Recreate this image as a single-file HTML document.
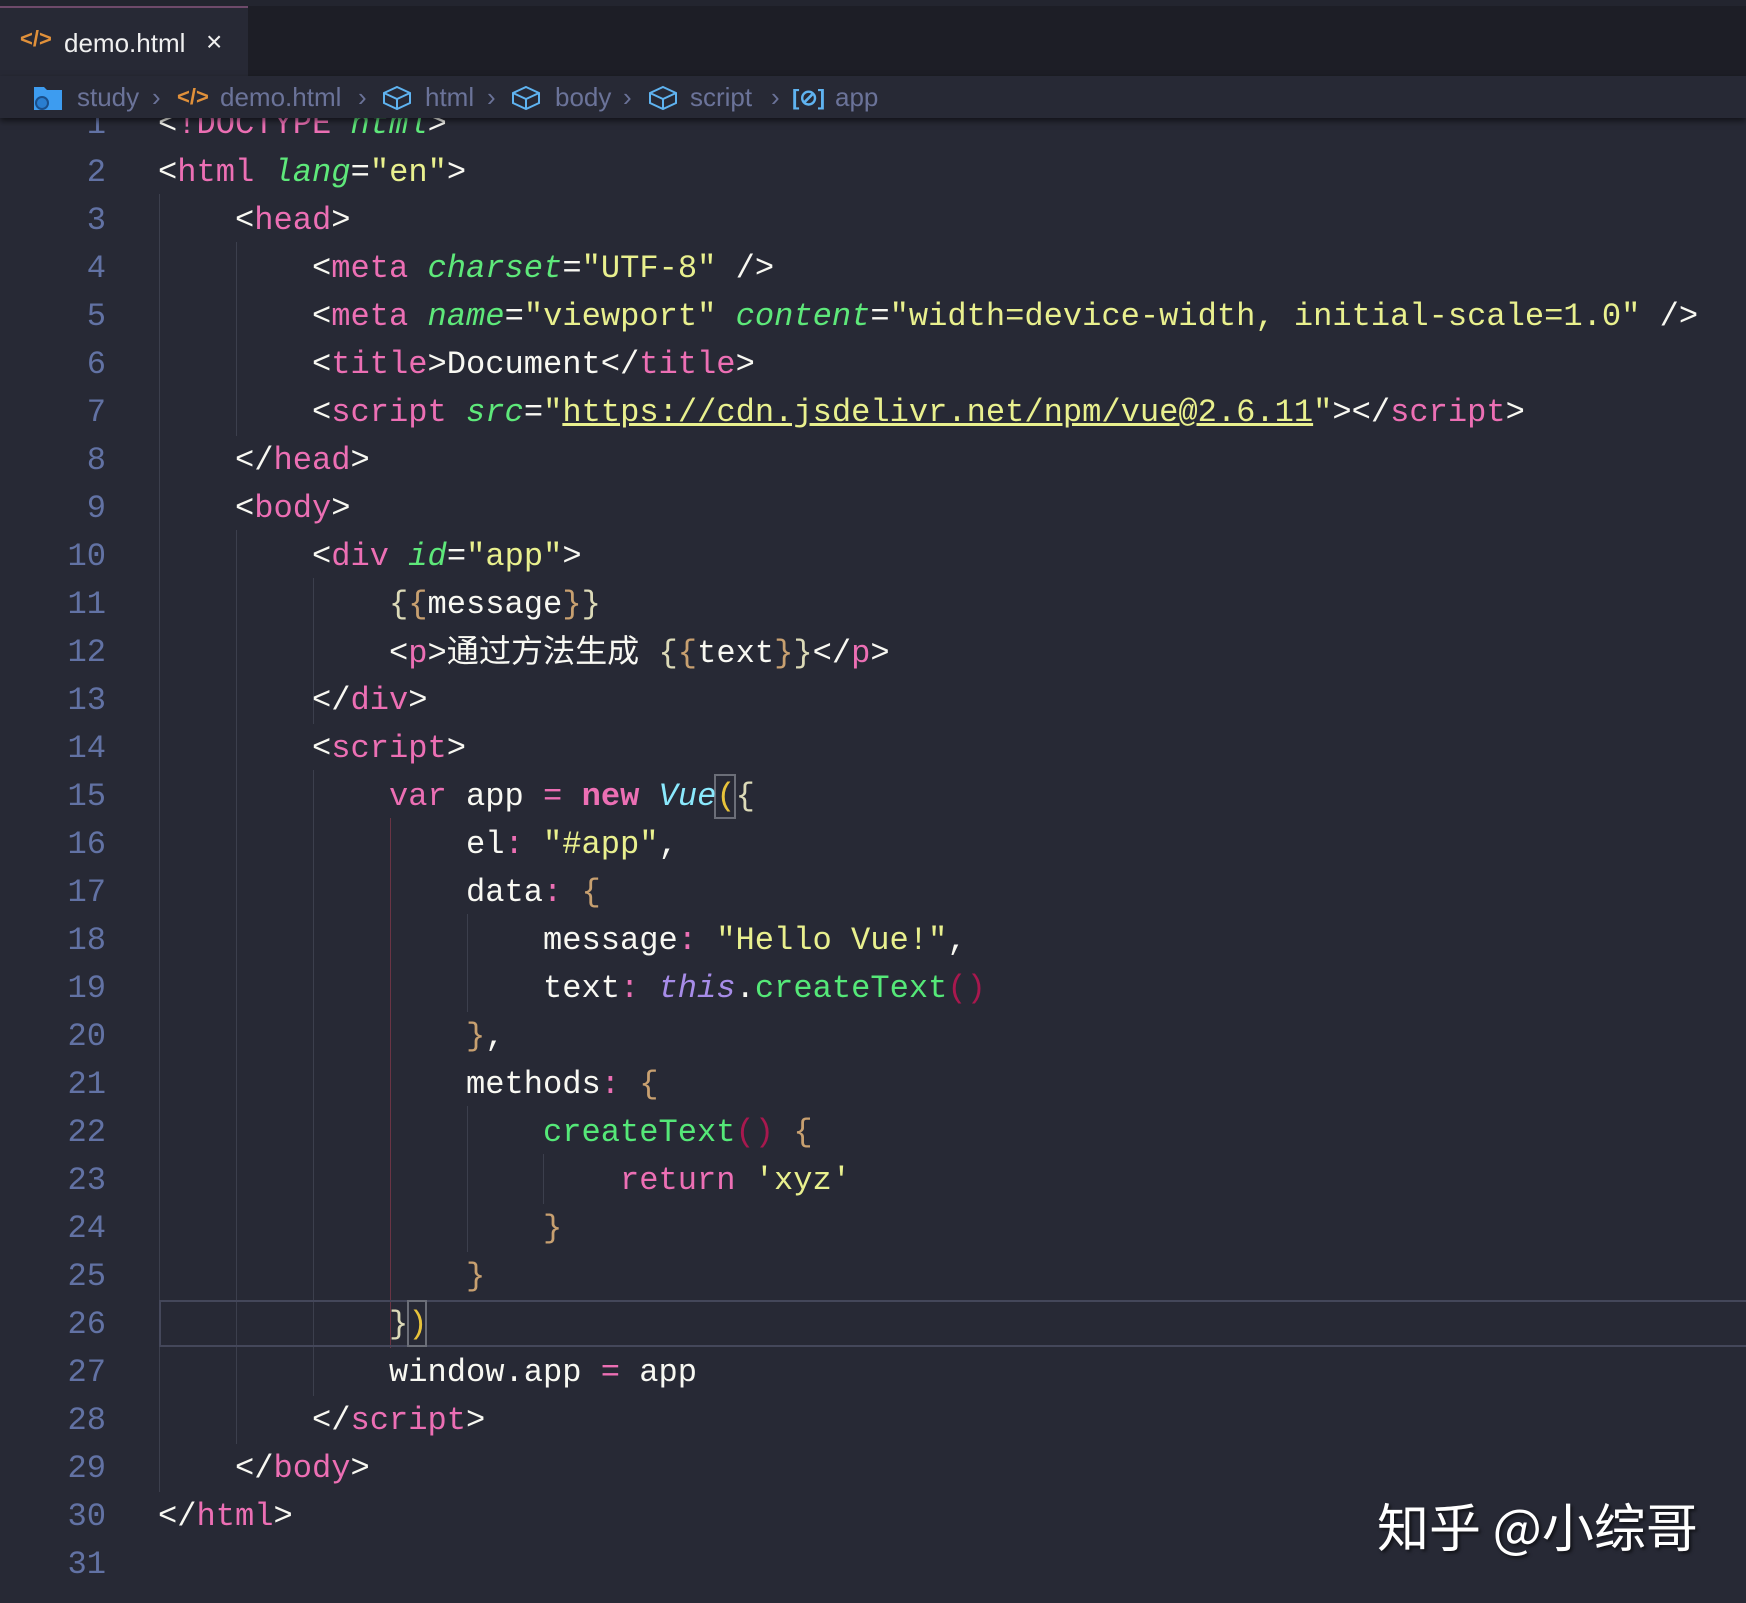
<!DOCTYPE html>
<html><head><meta charset="utf-8">
<style>
*{margin:0;padding:0;box-sizing:border-box}
body{width:1746px;height:1600px;background:#272935;overflow:hidden;position:relative;font-family:"Liberation Mono","Noto Sans CJK SC",monospace;}
.top{position:absolute;left:0;top:0;width:1746px;height:76px;background:#1d1e26}
.top0{position:absolute;left:0;top:0;width:1746px;height:6px;background:#23252f}
.tab{position:absolute;left:0;top:6px;width:248px;height:70px;background:#272935;border-top:2px solid #6e4a6a}
.ui{font-family:"Liberation Sans",sans-serif;position:absolute;white-space:nowrap}
.bc{position:absolute;left:0;top:76px;width:1746px;height:42px;background:#272935;box-shadow:0 3px 6px rgba(0,0,0,.55);z-index:5}
.bc .ui{color:#6b7399;font-size:26px;top:6px}
.ln{position:absolute;left:0;width:106px;text-align:right;color:#6272a4;font-size:32.1px;line-height:48px;height:48px}
.cd{position:absolute;left:158px;font-size:32.1px;line-height:48px;height:48px;color:#f8f8f2;white-space:pre}
.t{color:#ec6fb4}.a{color:#5ee87a;font-style:italic}.s{color:#e9f08e}.k{color:#ec6fb4}.kb{color:#ec6fb4;font-weight:bold}
.f{color:#55e878}.c{color:#8be9fd;font-style:italic}.th{color:#a78ce8;font-style:italic}.b{color:#c8a070}.w{color:#dcdab8}
.g{color:#e8c33a}.m{color:#a8184e}.u{text-decoration:underline}
.cj{font-family:"Noto Sans CJK SC",sans-serif;line-height:40px}
.gd{position:absolute;width:1px;background:#3c3f4d}
.L{position:absolute;left:0;top:3px;width:1746px;height:1600px}
</style></head><body>
<div class="top"></div><div class="top0"></div>
<div class="tab"></div>
<div class="ui" style="left:20px;top:26px;color:#e0903a;font-size:22px;font-weight:bold">&lt;/&gt;</div>
<div class="ui" style="left:64px;top:28px;color:#f0f0f0;font-size:26px">demo.html</div>
<div class="ui" style="left:206px;top:26px;color:#f0f0f0;font-size:28px">×</div>

<div class="bc">
<svg style="position:absolute;left:33px;top:8px" width="30" height="28" viewBox="0 0 30 28"><path d="M1 3h10l3 3h15v20H1z" fill="#3d9cf0"/><circle cx="9" cy="19" r="6" fill="#2a7ed0" stroke="#1b4f8a" stroke-width="2"/></svg>
<div class="ui" style="left:77px">study</div>
<div class="ui" style="left:152px">›</div>
<div class="ui" style="left:177px;top:8px;color:#e0903a;font-size:22px;font-weight:bold">&lt;/&gt;</div>
<div class="ui" style="left:220px">demo.html</div>
<div class="ui" style="left:358px">›</div>
<svg style="position:absolute;left:382px;top:9px" width="30" height="26" viewBox="0 0 30 26" fill="none" stroke="#5fb3f0" stroke-width="2"><path d="M15 2L28 8v10L15 24 2 18V8z M2 8l13 6 13-6 M15 14v10"/></svg>
<div class="ui" style="left:425px">html</div>
<div class="ui" style="left:487px">›</div>
<svg style="position:absolute;left:511px;top:9px" width="30" height="26" viewBox="0 0 30 26" fill="none" stroke="#5fb3f0" stroke-width="2"><path d="M15 2L28 8v10L15 24 2 18V8z M2 8l13 6 13-6 M15 14v10"/></svg>
<div class="ui" style="left:555px">body</div>
<div class="ui" style="left:623px">›</div>
<svg style="position:absolute;left:648px;top:9px" width="30" height="26" viewBox="0 0 30 26" fill="none" stroke="#5fb3f0" stroke-width="2"><path d="M15 2L28 8v10L15 24 2 18V8z M2 8l13 6 13-6 M15 14v10"/></svg>
<div class="ui" style="left:690px">script</div>
<div class="ui" style="left:771px">›</div>
<div class="ui" style="left:792px;top:9px;color:#5fb3f0;font-size:22px;font-weight:bold">[⊘]</div>
<div class="ui" style="left:835px">app</div>
</div>

<!-- indent guides -->
<div class="gd" style="left:159px;top:194px;height:1298px"></div>
<div class="gd" style="left:236px;top:242px;height:194px"></div>
<div class="gd" style="left:236px;top:530px;height:914px"></div>
<div class="gd" style="left:313px;top:578px;height:146px"></div>
<div class="gd" style="left:313px;top:770px;height:626px"></div>
<div class="gd" style="left:390px;top:818px;height:530px;background:#6a3444"></div>
<div class="gd" style="left:467px;top:914px;height:98px"></div>
<div class="gd" style="left:467px;top:1106px;height:146px"></div>
<div class="gd" style="left:543px;top:1154px;height:50px"></div>

<!-- current line -->
<div style="position:absolute;left:159px;top:1300px;width:1600px;height:47px;border:2px solid #44475a;border-right:none"></div>
<div style="position:absolute;left:714px;top:774px;width:22px;height:45px;border:2px solid #6b6e78"></div>
<div style="position:absolute;left:407px;top:1300px;width:20px;height:47px;border:2px solid #6b6e78"></div>

<div class="L">
<div class="ln" style="top:98px">1</div><div class="cd" style="top:98px">&lt;<span class="t">!DOCTYPE</span> <span class="a">html</span>&gt;</div>
<div class="ln" style="top:146px">2</div><div class="cd" style="top:146px">&lt;<span class="t">html</span> <span class="a">lang</span>=<span class="s">"en"</span>&gt;</div>
<div class="ln" style="top:194px">3</div><div class="cd" style="top:194px">    &lt;<span class="t">head</span>&gt;</div>
<div class="ln" style="top:242px">4</div><div class="cd" style="top:242px">        &lt;<span class="t">meta</span> <span class="a">charset</span>=<span class="s">"UTF-8"</span> /&gt;</div>
<div class="ln" style="top:290px">5</div><div class="cd" style="top:290px">        &lt;<span class="t">meta</span> <span class="a">name</span>=<span class="s">"viewport"</span> <span class="a">content</span>=<span class="s">"width=device-width, initial-scale=1.0"</span> /&gt;</div>
<div class="ln" style="top:338px">6</div><div class="cd" style="top:338px">        &lt;<span class="t">title</span>&gt;Document&lt;/<span class="t">title</span>&gt;</div>
<div class="ln" style="top:386px">7</div><div class="cd" style="top:386px">        &lt;<span class="t">script</span> <span class="a">src</span>=<span class="s">"<span class="u">https://cdn.jsdelivr.net/npm/vue@2.6.11</span>"</span>&gt;&lt;/<span class="t">script</span>&gt;</div>
<div class="ln" style="top:434px">8</div><div class="cd" style="top:434px">    &lt;/<span class="t">head</span>&gt;</div>
<div class="ln" style="top:482px">9</div><div class="cd" style="top:482px">    &lt;<span class="t">body</span>&gt;</div>
<div class="ln" style="top:530px">10</div><div class="cd" style="top:530px">        &lt;<span class="t">div</span> <span class="a">id</span>=<span class="s">"app"</span>&gt;</div>
<div class="ln" style="top:578px">11</div><div class="cd" style="top:578px">            <span class="w">{</span><span class="b">{</span>message<span class="b">}</span><span class="w">}</span></div>
<div class="ln" style="top:626px">12</div><div class="cd" style="top:626px">            &lt;<span class="t">p</span>&gt;<span class="cj">通过方法生成</span> <span class="w">{</span><span class="b">{</span>text<span class="b">}</span><span class="w">}</span>&lt;/<span class="t">p</span>&gt;</div>
<div class="ln" style="top:674px">13</div><div class="cd" style="top:674px">        &lt;/<span class="t">div</span>&gt;</div>
<div class="ln" style="top:722px">14</div><div class="cd" style="top:722px">        &lt;<span class="t">script</span>&gt;</div>
<div class="ln" style="top:770px">15</div><div class="cd" style="top:770px">            <span class="k">var</span> app <span class="k">=</span> <span class="kb">new</span> <span class="c">Vue</span><span class="g">(</span><span class="w">{</span></div>
<div class="ln" style="top:818px">16</div><div class="cd" style="top:818px">                el<span class="k">:</span> <span class="s">"#app"</span>,</div>
<div class="ln" style="top:866px">17</div><div class="cd" style="top:866px">                data<span class="k">:</span> <span class="b">{</span></div>
<div class="ln" style="top:914px">18</div><div class="cd" style="top:914px">                    message<span class="k">:</span> <span class="s">"Hello Vue!"</span>,</div>
<div class="ln" style="top:962px">19</div><div class="cd" style="top:962px">                    text<span class="k">:</span> <span class="th">this</span>.<span class="f">createText</span><span class="m">()</span></div>
<div class="ln" style="top:1010px">20</div><div class="cd" style="top:1010px">                <span class="b">}</span>,</div>
<div class="ln" style="top:1058px">21</div><div class="cd" style="top:1058px">                methods<span class="k">:</span> <span class="b">{</span></div>
<div class="ln" style="top:1106px">22</div><div class="cd" style="top:1106px">                    <span class="f">createText</span><span class="m">()</span> <span class="b">{</span></div>
<div class="ln" style="top:1154px">23</div><div class="cd" style="top:1154px">                        <span class="k">return</span> <span class="s">'xyz'</span></div>
<div class="ln" style="top:1202px">24</div><div class="cd" style="top:1202px">                    <span class="b">}</span></div>
<div class="ln" style="top:1250px">25</div><div class="cd" style="top:1250px">                <span class="b">}</span></div>
<div class="ln" style="top:1298px">26</div><div class="cd" style="top:1298px">            <span class="w">}</span><span class="g">)</span></div>
<div class="ln" style="top:1346px">27</div><div class="cd" style="top:1346px">            window.app <span class="k">=</span> app</div>
<div class="ln" style="top:1394px">28</div><div class="cd" style="top:1394px">        &lt;/<span class="t">script</span>&gt;</div>
<div class="ln" style="top:1442px">29</div><div class="cd" style="top:1442px">    &lt;/<span class="t">body</span>&gt;</div>
<div class="ln" style="top:1490px">30</div><div class="cd" style="top:1490px">&lt;/<span class="t">html</span>&gt;</div>
<div class="ln" style="top:1538px">31</div>
</div>

<div style="position:absolute;left:1377px;top:1490px;font-family:'Noto Sans CJK SC',sans-serif;font-size:52px;color:#fff;white-space:nowrap;text-shadow:2px 2px 3px rgba(0,0,0,.6);line-height:70px">知乎 @小综哥</div>
</body></html>
